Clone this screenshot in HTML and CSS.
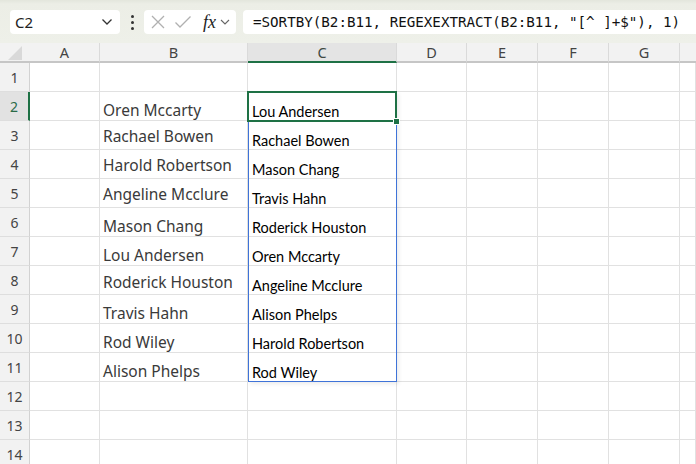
FILE: index.html
```html
<!DOCTYPE html>
<html>
<head>
<meta charset="utf-8">
<link rel="stylesheet" href="styles.css">
</head>
<body>
<div class="toolbar">
  <div class="namebox">
    <span class="ref">C2</span>
    <svg class="chev" width="12" height="8" viewBox="0 0 12 8"><path d="M1.5 1.5 L6 6 L10.5 1.5" fill="none" stroke="#333" stroke-width="1.3"/></svg>
  </div>
  <div class="dots"><i></i><i></i><i></i></div>
  <div class="fxbox">
    <svg width="16" height="16" viewBox="0 0 16 16"><path d="M2 2 L14 14 M14 2 L2 14" stroke="#b0b0b0" stroke-width="1.3" fill="none"/></svg>
    <svg width="18" height="16" viewBox="0 0 18 16"><path d="M1.5 8.5 L6 13 L16.5 2.5" stroke="#b0b0b0" stroke-width="1.3" fill="none"/></svg>
    <span class="fx">fx</span>
    <svg class="chev2" width="10" height="6" viewBox="0 0 10 6"><path d="M1 1 L5 5 L9 1" fill="none" stroke="#666" stroke-width="1.1"/></svg>
  </div>
  <div class="formula">=SORTBY(B2:B11, REGEXEXTRACT(B2:B11, "[^ ]+$"), 1)</div>
</div>

<div class="sheet">
  <div class="corner"><svg width="18" height="16" viewBox="0 0 18 16"><polygon points="16,1 16,15 2,15" fill="#d9d9d9"/></svg></div>
  <div class="ch">A</div><div class="ch">B</div><div class="ch sel">C</div><div class="ch">D</div><div class="ch">E</div><div class="ch">F</div><div class="ch">G</div><div class="ch last"></div>

  <div class="rh">1</div><div class="c"></div><div class="c"></div><div class="c"></div><div class="c"></div><div class="c"></div><div class="c"></div><div class="c"></div><div class="c"></div>
  <div class="rh sel">2</div><div class="c"></div><div class="c b low">Oren Mccarty</div><div class="c s">Lou Andersen</div><div class="c"></div><div class="c"></div><div class="c"></div><div class="c"></div><div class="c"></div>
  <div class="rh">3</div><div class="c"></div><div class="c b">Rachael Bowen</div><div class="c s">Rachael Bowen</div><div class="c"></div><div class="c"></div><div class="c"></div><div class="c"></div><div class="c"></div>
  <div class="rh">4</div><div class="c"></div><div class="c b">Harold Robertson</div><div class="c s">Mason Chang</div><div class="c"></div><div class="c"></div><div class="c"></div><div class="c"></div><div class="c"></div>
  <div class="rh">5</div><div class="c"></div><div class="c b">Angeline Mcclure</div><div class="c s">Travis Hahn</div><div class="c"></div><div class="c"></div><div class="c"></div><div class="c"></div><div class="c"></div>
  <div class="rh">6</div><div class="c"></div><div class="c b low">Mason Chang</div><div class="c s">Roderick Houston</div><div class="c"></div><div class="c"></div><div class="c"></div><div class="c"></div><div class="c"></div>
  <div class="rh">7</div><div class="c"></div><div class="c b low">Lou Andersen</div><div class="c s">Oren Mccarty</div><div class="c"></div><div class="c"></div><div class="c"></div><div class="c"></div><div class="c"></div>
  <div class="rh">8</div><div class="c"></div><div class="c b mid">Roderick Houston</div><div class="c s">Angeline Mcclure</div><div class="c"></div><div class="c"></div><div class="c"></div><div class="c"></div><div class="c"></div>
  <div class="rh">9</div><div class="c"></div><div class="c b low">Travis Hahn</div><div class="c s">Alison Phelps</div><div class="c"></div><div class="c"></div><div class="c"></div><div class="c"></div><div class="c"></div>
  <div class="rh">10</div><div class="c"></div><div class="c b low">Rod Wiley</div><div class="c s">Harold Robertson</div><div class="c"></div><div class="c"></div><div class="c"></div><div class="c"></div><div class="c"></div>
  <div class="rh">11</div><div class="c"></div><div class="c b low">Alison Phelps</div><div class="c s">Rod Wiley</div><div class="c"></div><div class="c"></div><div class="c"></div><div class="c"></div><div class="c"></div>
  <div class="rh">12</div><div class="c"></div><div class="c"></div><div class="c"></div><div class="c"></div><div class="c"></div><div class="c"></div><div class="c"></div><div class="c"></div>
  <div class="rh">13</div><div class="c"></div><div class="c"></div><div class="c"></div><div class="c"></div><div class="c"></div><div class="c"></div><div class="c"></div><div class="c"></div>
  <div class="rh">14</div><div class="c"></div><div class="c"></div><div class="c"></div><div class="c"></div><div class="c"></div><div class="c"></div><div class="c"></div><div class="c"></div>

  <div class="spill"></div>
  <div class="active"><span class="handle"></span></div>
</div>
</body>
</html>
```
FILE: styles.css
```css
* { box-sizing: border-box; }
html, body { margin: 0; padding: 0; }
body {
  width: 696px;
  height: 464px;
  overflow: hidden;
  background: #fff;
  font-family: "Noto Sans", "Open Sans", sans-serif;
}

.toolbar {
  height: 43px;
  display: flex;
  align-items: flex-start;
  padding: 10px 0 0 10px;
  background: linear-gradient(#e3e6dc 0, #eceee6 4px, #eef0e9 100%);
}
.namebox {
  width: 110px;
  height: 24px;
  background: #fff;
  border-radius: 4px;
  display: flex;
  align-items: center;
  justify-content: space-between;
  padding: 0 7px 0 5px;
}
.ref { font-size: 15px; color: #222; line-height: 1; }
.dots {
  width: 24px;
  height: 24px;
  display: flex;
  flex-direction: column;
  align-items: center;
  justify-content: center;
  gap: 3px;
}
.dots i { display: block; width: 3px; height: 3px; border-radius: 50%; background: #333; }
.fxbox {
  width: 92px;
  height: 24px;
  background: #fff;
  border-radius: 4px;
  display: flex;
  align-items: center;
  padding-left: 6px;
  gap: 8px;
}
.fx {
  font-family: "Liberation Serif", "DejaVu Serif", serif;
  font-style: italic;
  font-size: 18px;
  color: #222;
  line-height: 1;
  margin-left: 3px;
  margin-right: -4px;
}
.formula {
  margin-left: 7px;
  flex: 1;
  height: 24px;
  background: #fff;
  border-radius: 4px 0 0 4px;
  font-family: "DejaVu Sans Mono", "Liberation Mono", monospace;
  font-size: 14.2px;
  color: #111;
  line-height: 24px;
  padding-left: 10px;
  white-space: nowrap;
  overflow: hidden;
}

.sheet {
  position: relative;
  display: grid;
  grid-template-columns: 30px 70px 148px 149px 70px 71px 71px 71px 16px;
  grid-template-rows: 20px repeat(14, 29px);
}
.corner {
  background: #f2f2f2;
  border-bottom: 2px solid #c6c6c6;
  display: flex;
  align-items: center;
  justify-content: center;
  padding-top: 1px;
}
.ch {
  background: #f2f2f2;
  border-bottom: 2px solid #c6c6c6;
  border-right: 1px solid #dadada;
  font-size: 14.5px;
  color: #444;
  text-align: center;
  line-height: 19px;
}
.ch.sel { background: #e4e4e4; border-bottom-color: #1e7145; color: #3f4a44; }
.ch.last { border-right: none; }
.rh {
  background: #f2f2f2;
  border-bottom: 1px solid #dedede;
  border-right: 1px solid #d2d2d2;
  font-size: 14px;
  color: #444;
  text-align: center;
  line-height: 30px;
}
.rh.sel { background: #e2e2e2; color: #2a6b48; border-right: 2px solid #1e7145; }
.c {
  border-right: 1px solid #e1e1e1;
  border-bottom: 1px solid #e1e1e1;
  white-space: nowrap;
  overflow: visible;
}
.b {
  font-size: 15.5px;
  color: #3a3a3a;
  padding-left: 3px;
  line-height: 30px;
}
.b.low { line-height: 36px; }
.b.mid { line-height: 32px; }
.s {
  font-family: "Lato", "Noto Sans", sans-serif;
  font-size: 14.5px;
  color: #000;
  padding-left: 4px;
  display: flex;
  align-items: flex-end;
  line-height: 16px;
  padding-bottom: 0;
}

.spill {
  position: absolute;
  grid-column: 4 / 5;
  grid-row: 3 / 13;
  top: 0; left: 0; right: 0; bottom: 0;
  border: 1px solid #3f73d8;
  box-shadow: 2px 2px 4px rgba(0,0,0,0.08);
  pointer-events: none;
  z-index: 1;
}
.active {
  position: absolute;
  grid-column: 4 / 5;
  grid-row: 3 / 4;
  top: -1px; left: -1px; right: 0; bottom: -1px;
  border: 2px solid #1e7145;
  z-index: 2;
}
.handle {
  position: absolute;
  right: -5px;
  bottom: -5px;
  width: 7px;
  height: 7px;
  background: #1e7145;
  border: 1px solid #fff;
}
```
